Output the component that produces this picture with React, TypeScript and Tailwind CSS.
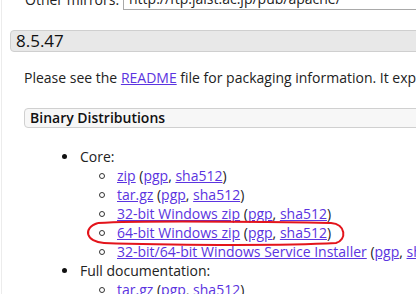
export default function App() {
  const core = [
    "zip",
    "tar.gz",
    "32-bit Windows zip",
    "64-bit Windows zip",
    "32-bit/64-bit Windows Service Installer",
  ];

  return (
    <div className="relative h-[294px] w-[416px] overflow-hidden bg-white font-['Open_Sans',sans-serif] text-[14px] leading-[19px] text-[#222]">
      <div className="ml-[1px] w-[700px] border-l border-[#ececec]">
        {/* mirrors row, mostly scrolled off */}
        <div className="-mt-[12px] flex items-center pl-[23px]">
          <span className="w-[98px] whitespace-nowrap">Other mirrors:</span>
          <div className="h-[22px] w-[340px] border border-[#a9a9a9] pl-[5px] text-[14px] leading-[20px]">
            http://ftp.jaist.ac.jp/pub/apache/
          </div>
        </div>

        <div className="ml-[8px] mt-[20px] h-[22px] rounded-[4px] border border-[#cfcfcf] bg-[#e8e8e8] pl-[5px] text-[17px] leading-[20px] text-[#111]">
          8.5.47
        </div>

        <div className="pl-[22px]">
          <p className="mt-[16px] whitespace-nowrap">
            Please see the <A>README</A> file for packaging information. It explains what every distribution contains.
          </p>

          <div className="mt-[21px] h-[20px] rounded-[4px] border border-[#d0d0d0] bg-[#f7f7f7] pl-[5px] font-semibold leading-[18px] text-[#111]">
            Binary Distributions
          </div>

          <div className="mt-[19px] pl-[36px]">
            <Row label="Core:" />
            {core.map((c) => (
              <Sub key={c} name={c} />
            ))}
            <Row label="Full documentation:" />
            <Sub name="tar.gz" />
          </div>
        </div>
      </div>

      {/* hand-drawn red ring around the 64-bit row */}
      <svg className="pointer-events-none absolute left-0 top-0" width="416" height="294">
        <path
          d="M 98 223 C 150 220, 270 222, 331 223 C 346 224, 347 240, 336 243 C 280 246, 160 245, 104 243 C 86 242, 82 228, 98 223"
          fill="none"
          stroke="#e3141b"
          strokeWidth="2"
        />
      </svg>
    </div>
  );
}

function A({ children }: { children: React.ReactNode }) {
  return <span className="text-[#5b34e0] underline">{children}</span>;
}

function Row({ label }: { label: string }) {
  return (
    <div className="flex h-[19px] items-center whitespace-nowrap">
      <span className="ml-[2px] mr-[13px] h-[5px] w-[5px] rounded-full bg-[#111]" />
      <span>{label}</span>
    </div>
  );
}

function Sub({ name }: { name: string }) {
  return (
    <div className="flex h-[19px] items-center whitespace-nowrap pl-[39px]">
      <span className="mr-[12px] h-[6px] w-[6px] rounded-full border-[1.5px] border-[#333]" />
      <span>
        <A>{name}</A> (<A>pgp</A>, <A>sha512</A>)
      </span>
    </div>
  );
}
